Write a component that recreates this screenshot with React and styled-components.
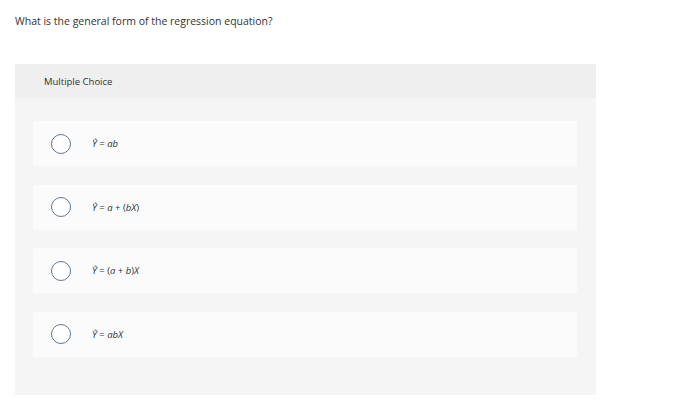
import React from 'react';
import styled, { createGlobalStyle } from 'styled-components';

const options = [
  { id: 'a', parts: [['i', 'Ŷ'], ['t', ' = '], ['i', 'ab']] },
  { id: 'b', parts: [['i', 'Ŷ'], ['t', ' = '], ['i', 'a'], ['t', ' + ('], ['i', 'bX'], ['t', ')']] },
  { id: 'c', parts: [['i', 'Ŷ'], ['t', ' = ('], ['i', 'a'], ['t', ' + '], ['i', 'b'], ['t', ')'], ['i', 'X']] },
  { id: 'd', parts: [['i', 'Ŷ'], ['t', ' = '], ['i', 'abX']] },
];

const GlobalStyle = createGlobalStyle`
  html, body {
    margin: 0;
    padding: 0;
    background: #ffffff;
    font-family: "Open Sans", "Liberation Sans", sans-serif;
    color: #333333;
  }
`;

const Page = styled.div`
  width: 700px;
  height: 415px;
  padding: 14px 0 0 15px;
  box-sizing: border-box;
`;

const Question = styled.p`
  margin: 0 0 35px 0;
  font-size: 10.5px;
  line-height: 15px;
  color: #333333;
`;

const Panel = styled.section`
  width: 581px;
  background: #f5f5f5;
  padding-bottom: 38px;
`;

const PanelHeader = styled.div`
  height: 34px;
  background: #efefef;
  display: flex;
  align-items: center;
  padding-left: 29px;
  font-size: 9.5px;
  color: #333333;
`;

const OptionList = styled.ul`
  list-style: none;
  margin: 0;
  padding: 23px 19px 0 18px;
  display: flex;
  flex-direction: column;
  gap: 18.5px;
`;

const OptionCard = styled.li`
  height: 45px;
  background: #fbfbfb;
  border-radius: 2px;
  display: flex;
  align-items: center;
  padding-left: 18px;
`;

const Radio = styled.span`
  width: 18px;
  height: 18px;
  border: 1.2px solid #66788a;
  border-radius: 50%;
  background: #ffffff;
  flex-shrink: 0;
`;

const Label = styled.span`
  margin-left: 21px;
  font-size: 9.5px;
  color: #333333;
  white-space: pre;

  i {
    font-style: italic;
  }
`;

const App = () => {
  return (
    <Page>
      <GlobalStyle />
      <Question>What is the general form of the regression equation?</Question>
      <Panel>
        <PanelHeader>Multiple Choice</PanelHeader>
        <OptionList>
          {options.map((opt) => (
            <OptionCard key={opt.id}>
              <Radio />
              <Label>
                {opt.parts.map(([kind, text], i) =>
                  kind === 'i' ? <i key={i}>{text}</i> : <span key={i}>{text}</span>
                )}
              </Label>
            </OptionCard>
          ))}
        </OptionList>
      </Panel>
    </Page>
  );
};

export default App;
